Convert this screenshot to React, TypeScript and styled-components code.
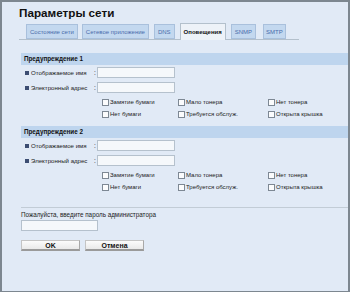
import React from 'react';
import styled, { createGlobalStyle } from 'styled-components';

const GlobalStyle = createGlobalStyle`
	html, body {
		margin: 0;
		padding: 0;
		background: #ffffff;
	}
	body {
		font-family: 'Liberation Sans', Arial, sans-serif;
	}
`;

const TABS = ['Состояние сети', 'Сетевое приложение', 'DNS', 'Оповещения', 'SNMP', 'SMTP'];
const ACTIVE_TAB = 'Оповещения';

const CHECKS = [
	['Замятие бумаги', 'Мало тонера', 'Нет тонера'],
	['Нет бумаги', 'Требуется обслуж.', 'Открыта крышка'],
];

const AlertBlock = ({ title, first }: { title: string; first?: boolean }) => (
	<Section first={first}>
		<SectionHeader>{title}</SectionHeader>
		<FieldRow>
			<Bullet />
			<FieldLabel>Отображаемое имя</FieldLabel>
			<Colon>:</Colon>
			<TextInput />
		</FieldRow>
		<FieldRow>
			<Bullet />
			<FieldLabel>Электронный адрес</FieldLabel>
			<Colon>:</Colon>
			<TextInput />
		</FieldRow>
		<CheckGrid>
			{CHECKS.flat().map((c) => (
				<CheckItem key={c}>
					<CheckBox />
					<span>{c}</span>
				</CheckItem>
			))}
		</CheckGrid>
	</Section>
);

const App = () => {
	return (
		<Frame>
			<GlobalStyle />
			<Title>Параметры сети</Title>
			<TabBar>
				{TABS.map((t) => (
					<Tab key={t} active={t === ACTIVE_TAB}>
						{t}
					</Tab>
				))}
			</TabBar>
			<AlertBlock title="Предупреждение 1" first />
			<AlertBlock title="Предупреждение 2" />
			<Separator />
			<PasswordLabel>Пожалуйста, введите пароль администратора</PasswordLabel>
			<PasswordInput />
			<ButtonRow>
				<Button>OK</Button>
				<Button>Отмена</Button>
			</ButtonRow>
		</Frame>
	);
};

export default App;

const Frame = styled.div`
	width: 350px;
	height: 292px;
	box-sizing: border-box;
	border: 2px solid #7d8790;
	border-bottom-width: 1px;
	background: #e1eaf6;
	padding-left: 17px;
	overflow: hidden;
	color: #1a1a1a;
`;

const Title = styled.div`
	margin-top: 3px;
	height: 15px;
	line-height: 15px;
	font-size: 11.7px;
	font-weight: 700;
	color: #111;
`;

const TabBar = styled.div`
	margin-top: 4px;
	width: 273px;
	height: 15px;
	display: flex;
	align-items: flex-end;
	gap: 4px;
	padding-left: 7px;
	border-bottom: 1px solid #b3c0cc;
`;

const Tab = styled.div<{ active?: boolean }>`
	height: ${(p) => (p.active ? '17px' : '15px')};
	margin-bottom: ${(p) => (p.active ? '-1px' : '0')};
	box-sizing: border-box;
	padding: 0 3px;
	display: flex;
	align-items: center;
	font-size: 6px;
	font-weight: ${(p) => (p.active ? 700 : 400)};
	color: ${(p) => (p.active ? '#111' : '#4a6cab')};
	background: ${(p) => (p.active ? '#edf2f8' : '#c3d8ef')};
	border: 1px solid ${(p) => (p.active ? '#b3c0cc' : '#a9c0dc')};
	border-bottom: ${(p) => (p.active ? 'none' : '1px solid #a9c0dc')};
	white-space: nowrap;
	&:nth-child(n + 3) {
		margin-left: 1px;
	}
	&:nth-child(6) {
		margin-left: 3px;
		padding: 0 2px;
	}
`;

const Section = styled.div<{ first?: boolean }>`
	margin-top: ${(p) => (p.first ? '13px' : '6px')};
	padding-left: 2px;
`;

const SectionHeader = styled.div`
	height: 12px;
	line-height: 12px;
	background: #bed5ee;
	padding-left: 3px;
	font-size: 6.3px;
	font-weight: 700;
	color: #111;
`;

const FieldRow = styled.div`
	display: flex;
	align-items: center;
	height: 11px;
	margin-top: 2px;
	padding-left: 4px;
	& + & {
		margin-top: 4px;
	}
`;

const Bullet = styled.span`
	width: 4px;
	height: 4px;
	background: #3c4d72;
	margin-right: 2px;
`;

const FieldLabel = styled.span`
	width: 63px;
	font-size: 6.1px;
	color: #222;
	white-space: nowrap;
`;

const Colon = styled.span`
	width: 3px;
	font-size: 6.5px;
	color: #222;
`;

const TextInput = styled.div`
	width: 78px;
	height: 11px;
	box-sizing: border-box;
	border: 1px solid #b5c1cd;
	background: #f5f8fb;
`;

const CheckGrid = styled.div`
	margin-top: 3px;
	padding-left: 81px;
	display: grid;
	grid-template-columns: 76px 90px 70px;
	grid-auto-rows: 12px;
`;

const CheckItem = styled.div`
	display: flex;
	align-items: center;
	font-size: 6px;
	color: #222;
	white-space: nowrap;
`;

const CheckBox = styled.span`
	width: 7px;
	height: 7px;
	box-sizing: border-box;
	border: 1px solid #7d8894;
	background: #fbfcfd;
	margin-right: 1px;
`;

const Separator = styled.div`
	margin-top: 14px;
	margin-left: 2px;
	height: 1px;
	background: #c2ccd6;
`;

const PasswordLabel = styled.div`
	margin-top: 3px;
	margin-left: 2px;
	height: 8px;
	line-height: 8px;
	font-size: 6.3px;
	color: #222;
	white-space: nowrap;
`;

const PasswordInput = styled.div`
	margin-top: 1px;
	margin-left: 2px;
	width: 77px;
	height: 11px;
	box-sizing: border-box;
	border: 1px solid #b5c1cd;
	background: #f5f8fb;
`;

const ButtonRow = styled.div`
	display: flex;
	gap: 5px;
	margin-top: 9px;
	margin-left: 2px;
`;

const Button = styled.div`
	width: 59px;
	height: 11px;
	box-sizing: border-box;
	display: flex;
	align-items: center;
	justify-content: center;
	font-size: 7px;
	font-weight: 700;
	color: #111;
	background: linear-gradient(#fbfbfb, #e9e9e9);
	border: 1px solid #c4c4c4;
	border-bottom: 2px solid #9a9a9a;
	border-right-color: #a8a8a8;
`;
